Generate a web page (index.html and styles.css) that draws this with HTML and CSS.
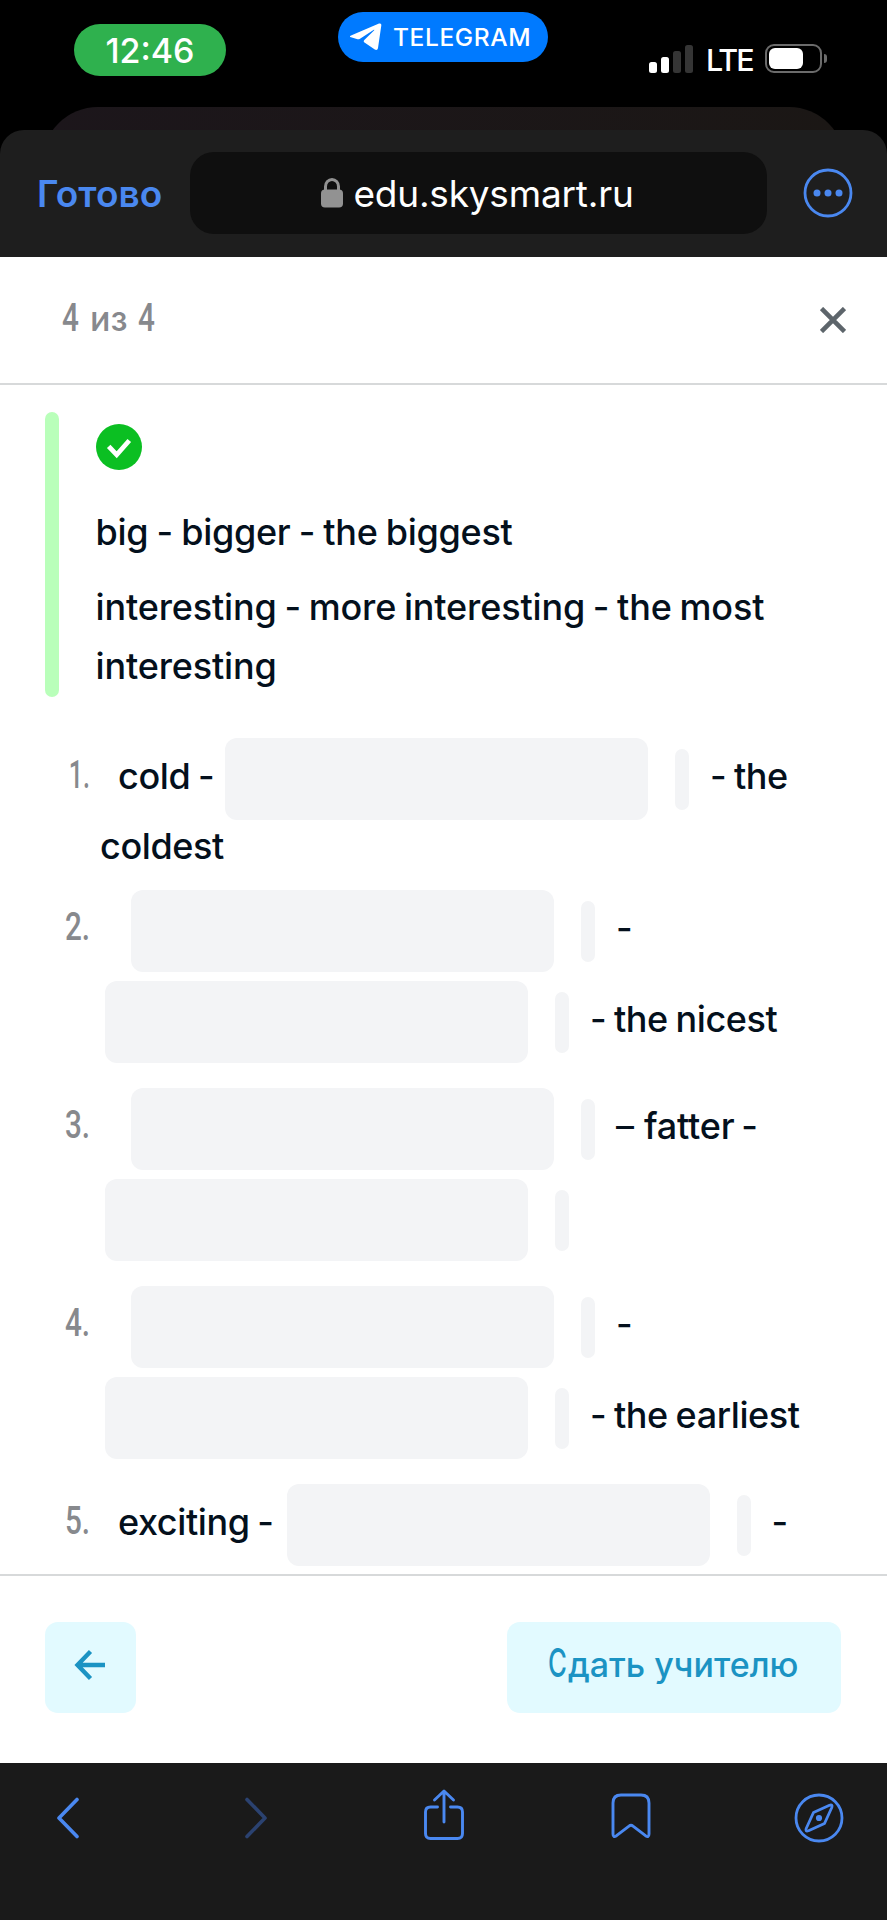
FILE: index.html
```html
<!DOCTYPE html>
<html lang="ru">
<head>
  <meta charset="UTF-8" />
  <meta name="viewport" content="width=device-width, initial-scale=1.0"/>
  <title>Skysmart</title>
  <link rel="stylesheet" href="styles.css">
</head>
<body>
  <div class="status">
    <div class="time">12:46</div>
    <div class="app-pill">
      <svg width="33" height="28" viewBox="0 0 33 28"><path d="M2 12.400 30 .6c1.600-.6 2.500.2 2.300 1.800L29 25c-.3 2-1.700 2.500-3.200 1.500L15.500 19.500c-1-.8-1-1.600-.2-2.500L25 7.500c.6-.7.2-1-.5-.6L11 15.700c-1 .6-2 .7-3.200.3L2 14.200C.5 13.700.6 13 2 12.400z" fill="#fff"/></svg>
      <span>TELEGRAM</span>
    </div>
    <div class="signal"><i></i><i></i><i class="off"></i><i class="off"></i></div>
    <span class="lte">LTE</span>
    <div class="battery"><div class="charge"></div></div>
    <div class="nub"></div>
  </div>
  <div class="back-card"></div>

  <div class="browser-bar">
    <span class="done">Готово</span>
    <div class="address">
      <svg width="22" height="30" viewBox="0 0 22 30"><rect x="0" y="11.500" width="22" height="18" rx="4" fill="#929292"/><path d="M4.500 13V8.500a6.500 7 0 0 1 13 0V13" fill="none" stroke="#929292" stroke-width="3"/></svg>
      <span>edu.skysmart.ru</span>
    </div>
    <svg class="more" width="50" height="50" viewBox="0 0 50 50"><circle cx="25" cy="25" r="23" fill="none" stroke="#4a88f0" stroke-width="2.800"/><g fill="#4a88f0"><circle cx="14" cy="25" r="3.500"/><circle cx="25" cy="25" r="3.500"/><circle cx="36" cy="25" r="3.500"/></g></svg>
  </div>

  <div class="page-head">
    <div class="counter"><b>4</b><span>из</span><b>4</b></div>
    <svg width="26" height="26" viewBox="0 0 26 26"><path d="M1.500 1.500l23 23M24.500 1.500l-23 23" stroke="#5d656b" stroke-width="4.600"/></svg>
  </div>

  <div class="content">
    <div class="example">
      <div class="bar"></div>
      <div class="example-body">
        <svg width="46" height="46" viewBox="0 0 46 46"><circle cx="23" cy="23" r="23" fill="#0bbf22"/><path d="M12.700 22.300l8 8.500L33.300 16.500" fill="none" stroke="#fff" stroke-width="4.800"/></svg>
        <p class="short">big - bigger - the biggest</p>
        <p class="long">interesting - more interesting - the most<br>interesting</p>
      </div>
    </div>

    <div class="item">
      <div class="num one">1.</div>
      <div class="line first"><span class="word cold">cold -</span><div class="field"></div><div class="mark"></div><span class="word">- the</span></div>
      <div class="line text"><span class="word">coldest</span></div>
    </div>
    <div class="item">
      <div class="num">2.</div>
      <div class="line indent"><div class="field"></div><div class="mark"></div><span class="word">-</span></div>
      <div class="line"><div class="field"></div><div class="mark"></div><span class="word">- the nicest</span></div>
    </div>
    <div class="item">
      <div class="num">3.</div>
      <div class="line indent"><div class="field"></div><div class="mark"></div><span class="word fatter"><span class="dash">–</span> fatter -</span></div>
      <div class="line"><div class="field"></div><div class="mark"></div></div>
    </div>
    <div class="item">
      <div class="num">4.</div>
      <div class="line indent"><div class="field"></div><div class="mark"></div><span class="word">-</span></div>
      <div class="line"><div class="field"></div><div class="mark"></div><span class="word">- the earliest</span></div>
    </div>
    <div class="item">
      <div class="num">5.</div>
      <div class="line first"><span class="word exciting">exciting -</span><div class="field"></div><div class="mark"></div><span class="word">-</span></div>
    </div>
  </div>

  <div class="actions">
    <div class="btn prev">
      <svg width="32" height="32" viewBox="0 0 32 32"><path d="M16.500 2.500L3.500 16l13 13.500M3.500 16H31" fill="none" stroke="#1b93c3" stroke-width="4.400"/></svg>
    </div>
    <div class="btn submit"><span class="cap">С</span><span class="label">дать учителю</span></div>
  </div>

  <div class="toolbar">
    <div class="tool"><svg width="24" height="42" viewBox="0 0 24 42"><path d="M21 2.500L3 21l18 18.500" fill="none" stroke="#4a88f0" stroke-width="3.600" stroke-linecap="round" stroke-linejoin="round"/></svg></div>
    <div class="tool"><svg width="24" height="42" viewBox="0 0 24 42"><path d="M3 2.500L21 21 3 39.500" fill="none" stroke="#2b4270" stroke-width="3.600" stroke-linecap="round" stroke-linejoin="round"/></svg></div>
    <div class="tool share"><svg width="42" height="52" viewBox="0 0 42 52"><path d="M14.500 18H7.500Q2.500 18 2.500 23V44.500Q2.500 49.500 7.500 49.500H34.500Q39.500 49.500 39.500 44.500V23Q39.500 18 34.500 18H27.500M21 33V2.500M11.500 11L21 2l9.500 9" fill="none" stroke="#4a88f0" stroke-width="2.900" stroke-linecap="round" stroke-linejoin="round"/></svg></div>
    <div class="tool bookmark"><svg width="42" height="48" viewBox="0 0 42 48"><path d="M3 11Q3 3 11 3h20Q39 3 39 11V42Q39 46 35.500 43.700L23 34.200Q21 32.500 19 34.200L6.500 43.700Q3 46 3 42z" fill="none" stroke="#4a88f0" stroke-width="2.900" stroke-linejoin="round"/></svg></div>
    <div class="tool"><svg width="50" height="50" viewBox="0 0 50 50"><g fill="none" stroke="#4a88f0" stroke-width="2.800" stroke-linejoin="round"><circle cx="25" cy="25" r="23"/><path d="M19.500 19.500L35.500 12.200Q39 11 37.800 14.500L30.500 30.500 14.500 37.800Q11 39 12.200 35.500z"/></g><circle cx="25" cy="25" r="3.100" fill="#4a88f0"/></svg></div>
  </div>
</body>
</html>
```
FILE: styles.css
```css
* { box-sizing: border-box; }

body {
  margin: 0;
  width: 887px;
  height: 1920px;
  overflow: hidden;
  background: #000;
  font-family: Inter, "Liberation Sans", sans-serif;
  color: #04101c;
}

svg { display: block; flex: none; }

/* status bar */
.status {
  height: 107px;
  display: flex;
  align-items: flex-start;
  padding-left: 74px;
  color: #fff;
}

.time {
  width: 152px;
  height: 52px;
  margin: 24px 112px 0 0;
  border-radius: 26px;
  background: #2fb14e;
  font-size: 34px;
  font-weight: 500;
  line-height: 54px;
  text-align: center;
}

.app-pill {
  width: 210px;
  height: 50px;
  margin: 11.5px 101px 0 0;
  padding-left: 11px;
  border-radius: 25px;
  background: #007aff;
  display: flex;
  align-items: center;
  gap: 11px;
  font-size: 24.5px;
  font-weight: 550;
  letter-spacing: .6px;
}

.signal {
  display: flex;
  align-items: flex-end;
  gap: 4px;
  height: 28px;
  margin: 45px 13px 0 0;
}

.signal i { width: 8px; height: 11px; border-radius: 2.5px; background: #fff; }
.signal i:nth-child(2) { height: 16px; }
.signal i:nth-child(3) { height: 22px; }
.signal i:nth-child(4) { height: 28px; }
.signal i.off { background: #353535; }

.lte {
  width: 60px;
  margin-top: 41.5px;
  font-size: 30.5px;
  font-weight: 500;
  line-height: 36px;
  letter-spacing: -2px;
}

.battery {
  width: 57px;
  height: 29px;
  margin: 44px 2px 0 -1px;
  padding: 2px;
  border: 2px solid #6b6b6b;
  border-radius: 9px;
}

.charge { width: 34px; height: 21px; border-radius: 6px; background: #fff; }
.nub { width: 3px; height: 9px; margin-top: 54px; border-radius: 0 4px 4px 0; background: #6b6b6b; }

.back-card {
  height: 60px;
  margin: 0 42px -37px;
  border-radius: 56px 56px 0 0;
  background: linear-gradient(90deg, #1c161b, #1b1715);
}

/* browser bar */
.browser-bar {
  position: relative;
  height: 127px;
  padding: 22px 34px 0 37px;
  border-radius: 24px 24px 0 0;
  background: #1e1e1e;
  display: flex;
}

.done {
  width: 153.5px;
  font-size: 37px;
  font-weight: 600;
  line-height: 83px;
  letter-spacing: .1px;
  color: #4a88f0;
}

.address {
  width: 577px;
  height: 82px;
  border-radius: 24px;
  background: #0f0f0f;
  display: flex;
  align-items: center;
  padding-left: 131px;
  gap: 10px;
  font-size: 37px;
  letter-spacing: -.2px;
  color: #fff;
}

.more { margin: 16px 0 0 36px; }

/* task header */
.page-head {
  height: 128px;
  padding: 0 41px 0 62px;
  background: #fff;
  border-bottom: 2px solid #d7d9da;
  display: flex;
  align-items: center;
  justify-content: space-between;
}

.counter {
  display: flex;
  align-items: baseline;
  padding-bottom: 4px;
  color: #87898d;
  font-size: 34px;
  font-weight: 500;
}

.counter b { width: 28px; font-size: 38px; font-weight: 500; font-family: Roboto, sans-serif; transform: scaleX(.78); transform-origin: left; }
.counter span { width: 48px; }

.content {
  height: 1189px;
  padding: 27px 0 0 45px;
  overflow: hidden;
  background: #fff;
  font-size: 36px;
  font-weight: 500;
  letter-spacing: -.4px;
  word-spacing: -1.5px;
}

.example {
  display: flex;
  height: 285px;
  margin-bottom: 41px;
}

.bar { width: 14px; border-radius: 7px; background: #b9ffba; }
.example-body { padding: 12px 0 0 36.5px; }

.example p { margin: 0 0 15.5px; line-height: 59px; white-space: nowrap; }
.example .short { margin-top: 33px; letter-spacing: -.3px; word-spacing: -1px; }
.example .long { letter-spacing: -.15px; word-spacing: -1.7px; }

/* exercise rows */
.item {
  display: grid;
  grid-template-columns: 60px 1fr;
  row-gap: 9px;
  margin-bottom: 25px;
}

.num {
  width: 45px;
  text-align: right;
  font-family: Roboto, sans-serif;
  font-size: 38px;
  font-weight: 500;
  line-height: 75px;
  letter-spacing: 0;
  color: #87898d;
  transform: scaleX(.78);
  transform-origin: right;
}

.num.one { transform: scaleX(.66); }

.line { grid-column: 2; display: flex; align-items: center; height: 82px; }
.line.indent { padding-left: 26px; }
.line.first { padding-left: 13px; }
.line.text { height: 45px; margin: -9px 0 0 -5px; padding-top: 1px; align-items: flex-start; line-height: 50px; }

.field { width: 423px; height: 82px; border-radius: 12px; background: #f3f4f6; }
.mark { width: 14px; height: 61px; margin: 0 21px 0 27px; border-radius: 7px; background: #f3f4f6; }

.word { padding-bottom: 7px; white-space: nowrap; }
.cold { width: 107px; }
.exciting { width: 168.5px; }
.fatter { letter-spacing: -.2px; word-spacing: -2.5px; }
.dash { display: inline-block; width: 21px; font-weight: 400; }

/* bottom actions */
.actions {
  height: 189px;
  padding: 46px 46px 0 45px;
  background: #fff;
  border-top: 2px solid #d7d9da;
  display: flex;
  justify-content: space-between;
}

.btn { height: 91px; border-radius: 13px; background: #e2faff; display: flex; color: #1b93c3; }
.prev { width: 91px; padding: 27px 0 0 29px; }
.submit { width: 334px; padding-left: 41px; align-items: baseline; line-height: 82px; font-size: 34px; font-weight: 500; }
.submit .cap { width: 20px; font-size: 39px; font-weight: 500; transform: scaleX(.66); transform-origin: left; }

.toolbar {
  height: 157px;
  background: #1a1a1a;
  display: flex;
  align-items: center;
  justify-content: space-between;
  padding: 0 43px 48px;
}

.tool { width: 50px; display: flex; justify-content: center; }
.share { padding-bottom: 6px; }
.bookmark { padding-bottom: 3px; }
```
